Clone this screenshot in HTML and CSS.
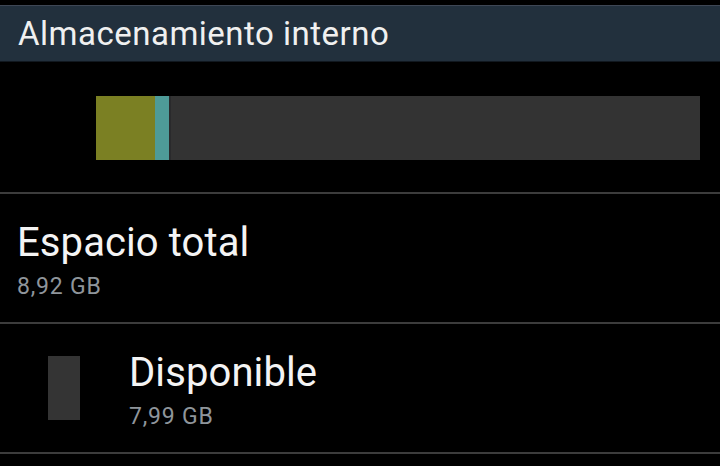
FILE: index.html
```html
<!DOCTYPE html>
<html lang="es">
<head>
<meta charset="utf-8">
<title>Almacenamiento</title>
<link rel="stylesheet" href="styles.css">
</head>
<body>
<div class="screen">
  <div class="header">Almacenamiento interno</div>
  <div class="usage">
    <div class="bar">
      <div class="seg seg-apps" style="width:59px"></div>
      <div class="seg seg-media" style="width:14px"></div>
      <div class="seg seg-sep" style="width:2px"></div>
      <div class="seg seg-free"></div>
    </div>
  </div>
  <div class="divider"></div>
  <div class="row">
    <div class="texts">
      <div class="title">Espacio total</div>
      <div class="sub">8,92 GB</div>
    </div>
  </div>
  <div class="divider"></div>
  <div class="row row-icon">
    <div class="swatch"></div>
    <div class="texts">
      <div class="title">Disponible</div>
      <div class="sub">7,99 GB</div>
    </div>
  </div>
  <div class="divider"></div>
</div>
</body>
</html>
```
FILE: styles.css
```css
html, body {
  margin: 0;
  padding: 0;
  background: #000;
}
.screen {
  width: 720px;
  height: 466px;
  overflow: hidden;
  background: #000;
  font-family: Roboto, "Noto Sans", sans-serif;
  color: #f2f2f2;
  padding-top: 5px;
  box-sizing: border-box;
}
.header {
  height: 55px;
  background: #22303d;
  border-top: 1px solid #3e4755;
  border-bottom: 1px solid #11181f;
  box-sizing: content-box;
  padding-left: 18px;
  display: flex;
  align-items: center;
  font-size: 33px;
  letter-spacing: 0.5px;
  color: #f0f0f0;
}
.usage {
  height: 130px;
  padding-left: 96px;
  padding-right: 20px;
  display: flex;
  align-items: center;
}
.bar {
  flex: 1;
  height: 64px;
  display: flex;
  margin-top: 2px;
}
.seg { height: 100%; }
.seg-apps { background: #7b8023; }
.seg-media { background: #4e9b98; }
.seg-sep { background: #2a2a2c; }
.seg-free { flex: 1; background: #333333; }
.divider {
  height: 2px;
  background: #3c3c3c;
}
.row {
  height: 128px;
  box-sizing: border-box;
  display: flex;
  align-items: flex-start;
  padding-left: 17px;
  padding-top: 26px;
}
.row-icon {
  padding-left: 48px;
}
.swatch {
  align-self: center;
  width: 32px;
  height: 64px;
  margin-top: -26px;
  background: #343434;
  margin-right: 49px;
}
.texts {
  display: flex;
  flex-direction: column;
}
.title {
  font-size: 40px;
  line-height: 46px;
  letter-spacing: 0.1px;
  color: #f4f4f4;
}
.sub {
  margin-top: 6px;
  font-size: 23px;
  line-height: 30px;
  letter-spacing: 0.8px;
  color: #8f959b;
}
```
